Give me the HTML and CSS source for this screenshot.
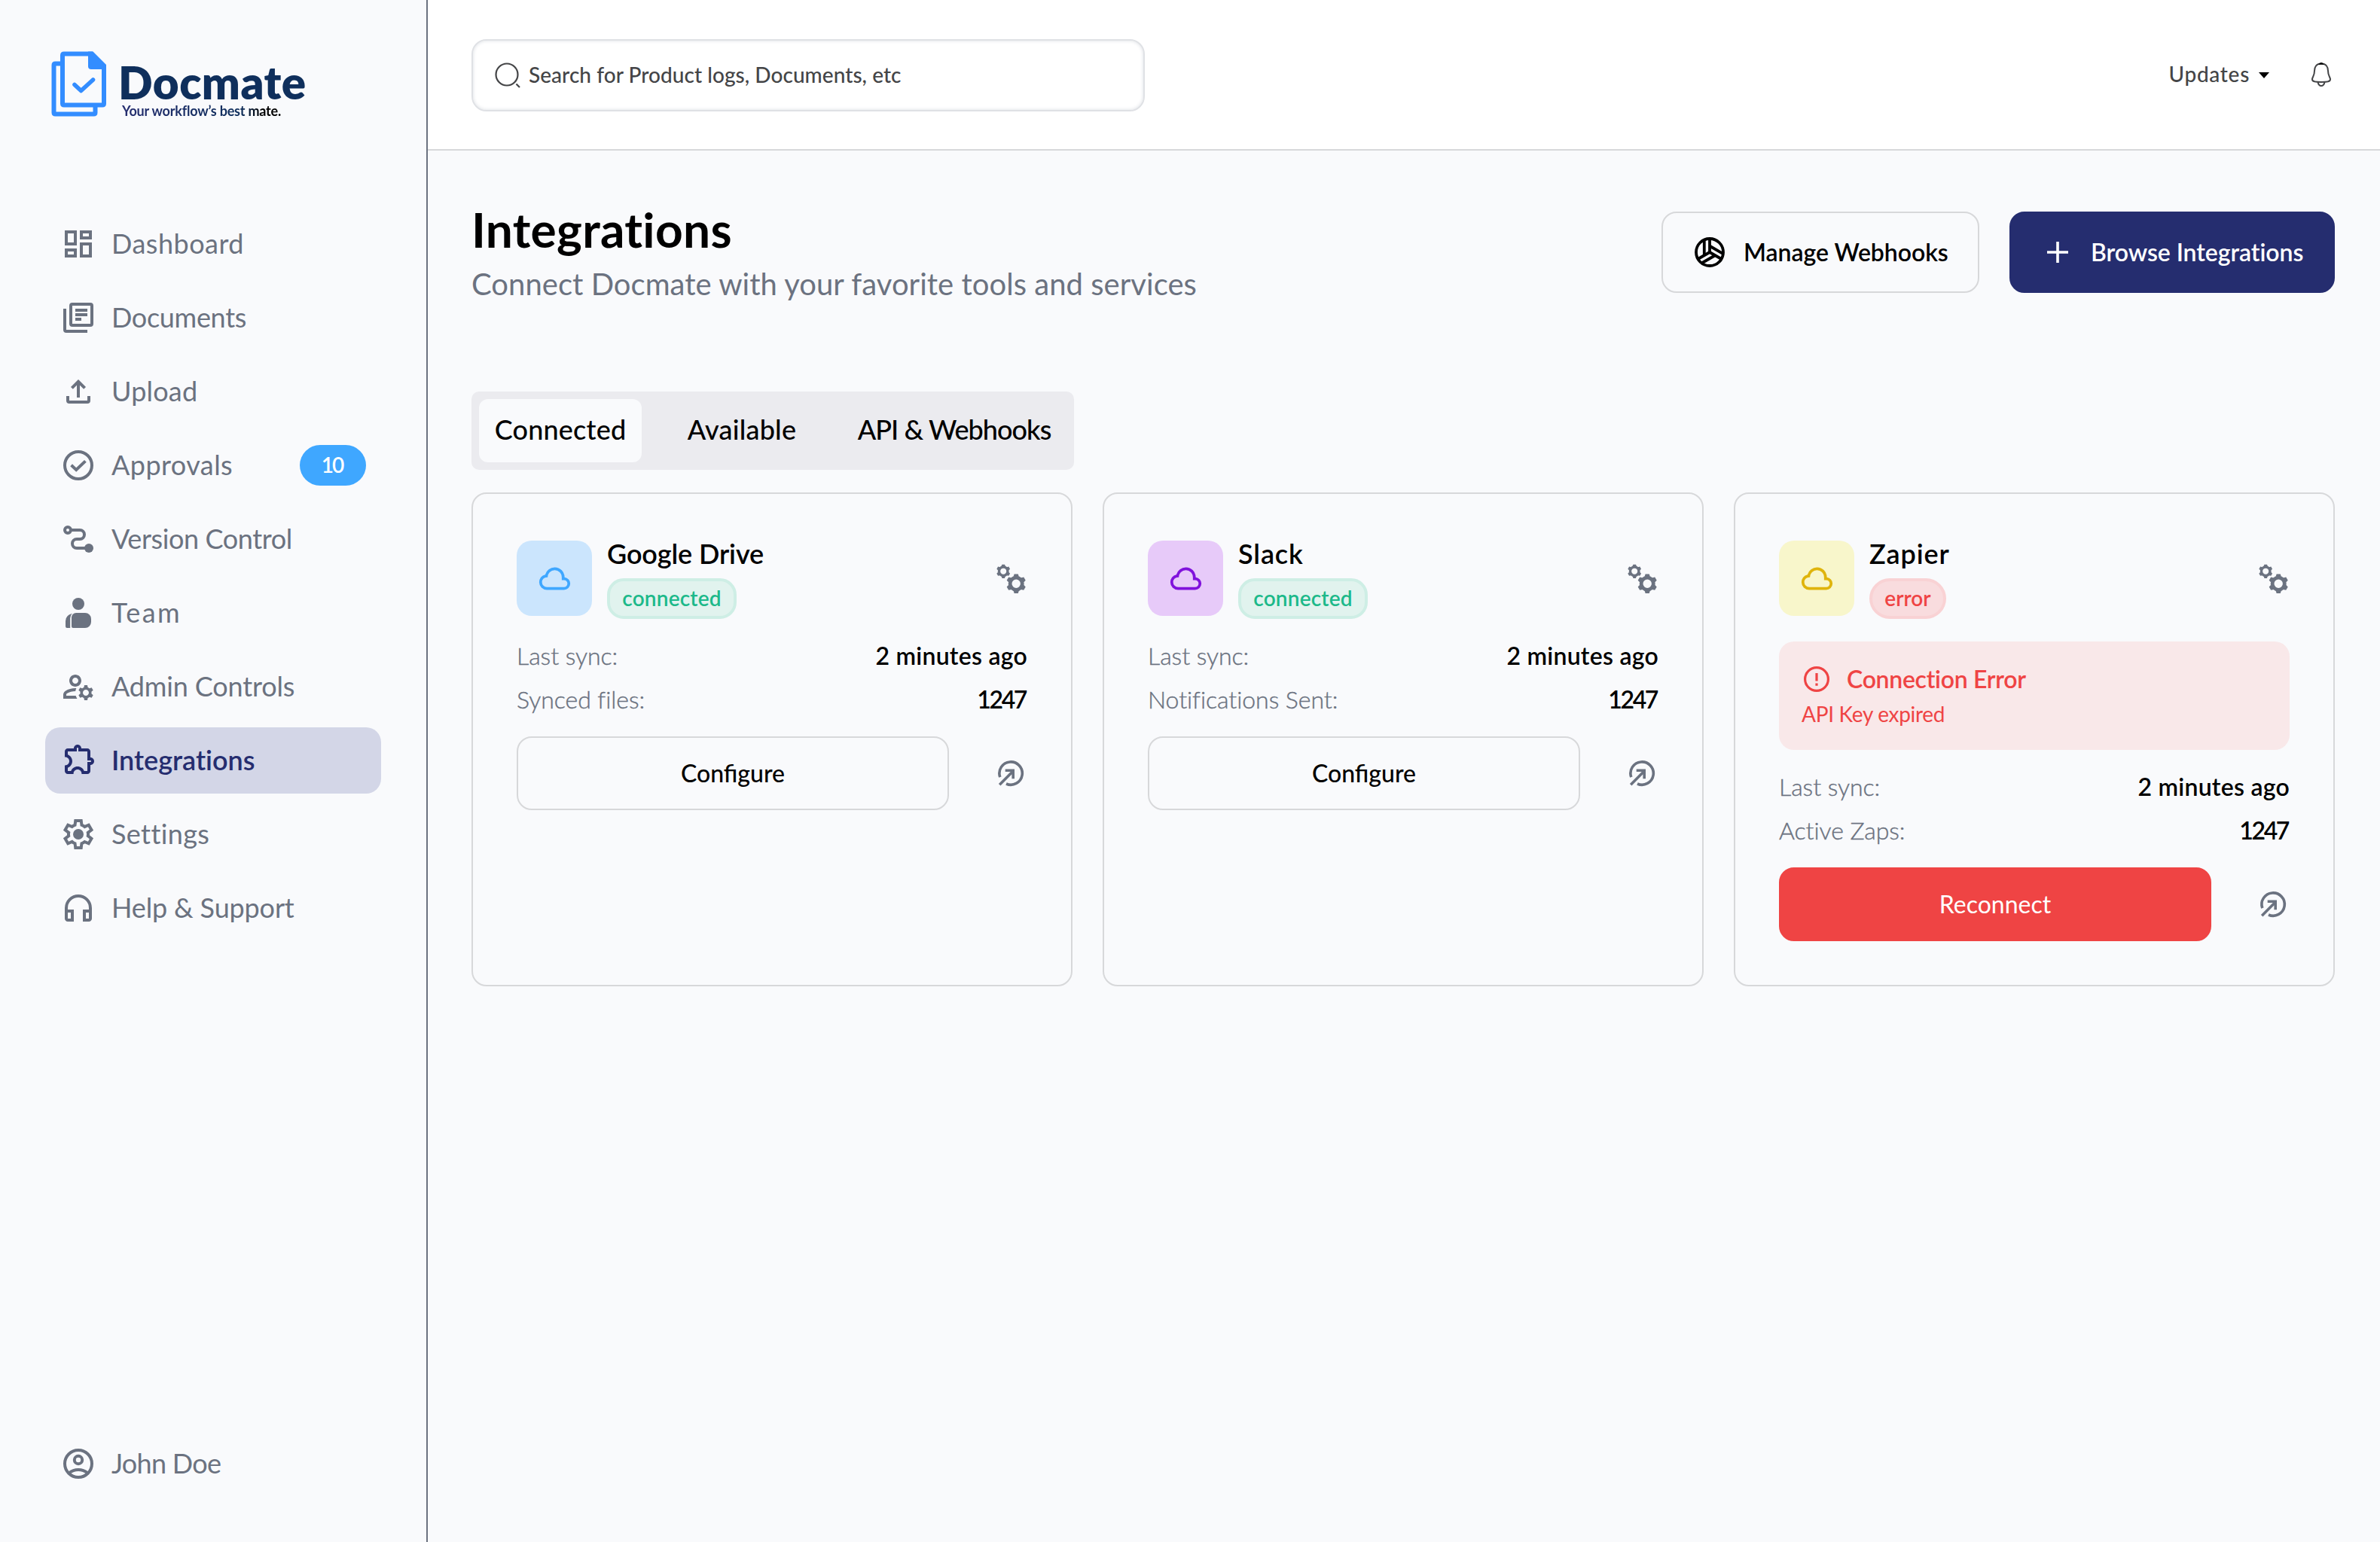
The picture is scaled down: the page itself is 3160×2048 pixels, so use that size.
FILE: index.html
```html
<!DOCTYPE html>
<html lang="en">
<head>
    <meta charset="UTF-8">
    <title>Docmate - Integrations</title>
    <link rel="stylesheet" href="styles.css">
</head>
<body>
    <!-- shared icons -->
    <svg class="defs">
        <symbol id="cloud" viewBox="0 0 24 24">
            <path fill-rule="evenodd" d="M6.5 20q-2.275 0-3.8875-1.575T1 14.575q0-1.95 1.175-3.475T5.25 9.15q.625-2.3 2.5-3.725T12 4q2.925 0 4.9625 2.0375T19 11q1.725.2 2.8625 1.4875T23 15.5q0 1.875-1.3125 3.1875T18.5 20ZM6.5 18h12q1.05 0 1.775-.725T21 15.5q0-1.05-.725-1.775T18.5 13H17v-2q0-2.075-1.4625-3.5375T12 6Q9.925 6 8.4625 7.4625T7 11h-.5q-1.45 0-2.475 1.025T3 14.5q0 1.45 1.025 2.475T6.5 18Z"/>
        </symbol>
        <symbol id="cog" viewBox="-13 -13 26 26">
            <circle r="8.1" fill="none" stroke="currentColor" stroke-width="4.8"/>
            <path id="tooth" d="M-3.6-9.4-2.5-13H2.5L3.6-9.4Z"/>
            <use href="#tooth" transform="rotate(60)"/>
            <use href="#tooth" transform="rotate(120)"/>
            <use href="#tooth" transform="rotate(180)"/>
            <use href="#tooth" transform="rotate(240)"/>
            <use href="#tooth" transform="rotate(300)"/>
        </symbol>
        <symbol id="gears" viewBox="0 0 40 40">
            <use href="#cog" x="1" y="1.5" width="18.4" height="18.4"/>
            <use href="#cog" x="14.2" y="14.2" width="26" height="26"/>
        </symbol>
        <symbol id="open" viewBox="0 0 40 40">
            <g fill="none" stroke="currentColor" stroke-width="3.6">
                <path d="M5.8 25.2A15.2 15.2 0 1 1 14 34"/>
                <path d="M5.2 35.2 23 17.2M12.7 16.2H23.2V27.2"/>
            </g>
        </symbol>
    </svg>

    <div class="app">
        <aside class="sidebar">
            <div class="logo">
                <svg class="logo-mark" viewBox="0 0 74 88" fill="none" stroke="#338dff" stroke-width="6">
                    <path d="M13 16.5H5.5q-2 0-2 2V81.5q0 2 2 2H56.5q2 0 2-2V74"/>
                    <path d="M55 3.6H17q-2 0-2 2V69.5q0 2 2 2H68q2 0 2-2V20"/>
                    <path d="M49 .6H55.5L73 18V24H53q-4 0-4-4Z" fill="#338dff" stroke="none"/>
                    <path d="M31 44.5 39.6 52.5 55.5 38" stroke-width="5.6" stroke-linecap="round" stroke-linejoin="round"/>
                </svg>
                <div class="logo-text">
                    <div class="logo-name">Docmate</div>
                    <div class="logo-tag">Your workflow’s best mate.</div>
                </div>
            </div>

            <nav class="nav">
                <a class="nav-item dashboard">
                    <svg viewBox="0 0 24 24"><path fill-rule="evenodd" d="M21 3h-8v6h8V3ZM11 3H3v10h8V3Zm10 8h-8v10h8V11Zm-10 4H3v6h8v-6ZM19 5v2h-4V5h4ZM9 5v6H5V5h4Zm10 8v6h-4v-6h4ZM9 17v2H5v-2h4Z"/></svg>
                    <span>Dashboard</span>
                </a>
                <a class="nav-item documents">
                    <svg viewBox="0 0 24 24" class="line"><rect x="7" y="3" width="14" height="14" rx="1"/><path d="M3 6V20q0 1 1 1H18M10 7H18M10 10H18M10 13H14"/></svg>
                    <span>Documents</span>
                </a>
                <a class="nav-item upload">
                    <svg viewBox="0 0 24 24" class="line"><path d="M12 16V5.5M7.7 9.7 12 5.4 16.3 9.7M5 15V18q0 1 1 1H18q1 0 1-1V15"/></svg>
                    <span>Upload</span>
                </a>
                <a class="nav-item approvals">
                    <svg viewBox="0 0 24 24" class="line"><circle cx="12" cy="12" r="9"/><path d="M7.3 11.9 10.6 15 16.7 9.2"/></svg>
                    <span>Approvals</span>
                    <b class="badge">10</b>
                </a>
                <a class="nav-item version">
                    <svg viewBox="0 0 24 24" class="line"><circle cx="5" cy="6" r="2"/><path d="M7 6H13a3 3 0 0 1 0 6H11a3 3 0 0 0 0 6H18"/><circle cx="19" cy="18" r="3" class="solid"/></svg>
                    <span>Version Control</span>
                </a>
                <a class="nav-item team">
                    <svg viewBox="0 0 24 24"><circle cx="12" cy="6" r="4"/><path d="M10.5 12H16.5a4 4 0 0 1 4 4v2a4 4 0 0 1-4 4H8.5q-1 0-1-1V15a3 3 0 0 1 3-3ZM8 12.4Q6.6 13.5 6.6 15.5V22H4.5q-1 0-1-1V17.5Q3.5 13.5 8 12.4Z"/></svg>
                    <span>Team</span>
                </a>
                <a class="nav-item admin">
                    <svg viewBox="0 0 24 24"><path fill-rule="evenodd" d="M4 18v-.65c0-.34.16-.66.41-.81C6.1 15.53 8.03 15 10 15c.03 0 .05 0 .08.01.1-.7.3-1.37.59-1.98-.22-.02-.44-.03-.67-.03-2.42 0-4.68.67-6.61 1.82-.88.52-1.39 1.5-1.39 2.53V20h9.26c-.42-.6-.75-1.28-.97-2H4ZM10 12c2.21 0 4-1.79 4-4s-1.79-4-4-4-4 1.79-4 4 1.79 4 4 4Zm0-6c1.1 0 2 .9 2 2s-.9 2-2 2-2-.9-2-2 .9-2 2-2ZM20.75 16c0-.22-.03-.42-.06-.63l1.14-1.01-1-1.73-1.45.49c-.32-.27-.68-.48-1.08-.63L18 11h-2l-.3 1.49c-.4.15-.76.36-1.08.63l-1.45-.49-1 1.73 1.14 1.01c-.03.21-.06.41-.06.63s.03.42.06.63l-1.14 1.01 1 1.73 1.45-.49c.32.27.68.48 1.08.63L16 21h2l.3-1.49c.4-.15.76-.36 1.08-.63l1.45.49 1-1.73-1.14-1.01c.03-.21.06-.41.06-.63ZM17 18c-1.1 0-2-.9-2-2s.9-2 2-2 2 .9 2 2-.9 2-2 2Z"/></svg>
                    <span>Admin Controls</span>
                </a>
                <a class="nav-item integrations active">
                    <svg viewBox="-1 1 24 24"><path d="M10.5 4.5c.28 0 .5.22.5.5v2h6v6h2c.28 0 .5.22.5.5s-.22.5-.5.5h-2v6h-2.12c-.68-1.75-2.39-3-4.38-3s-3.7 1.25-4.38 3H4v-2.12c1.75-.68 3-2.39 3-4.38 0-1.99-1.24-3.7-2.99-4.38L4 7h6V5c0-.28.22-.5.5-.5m0-2C9.12 2.5 8 3.62 8 5H4c-1.1 0-1.99.9-1.99 2v3.8h.29c1.49 0 2.7 1.21 2.7 2.7s-1.21 2.7-2.7 2.7H2V20c0 1.1.9 2 2 2h3.8v-.3c0-1.49 1.21-2.7 2.7-2.7s2.7 1.21 2.7 2.7v.3H17c1.1 0 2-.9 2-2v-4c1.38 0 2.5-1.12 2.5-2.5S20.38 11 19 11V7c0-1.1-.9-2-2-2h-4c0-1.38-1.12-2.5-2.5-2.5Z"/></svg>
                    <span>Integrations</span>
                </a>
                <a class="nav-item settings">
                    <svg viewBox="0 0 24 24"><path fill-rule="evenodd" d="m9.25 22-.4-3.2q-.325-.125-.6125-.3-.2875-.175-.5625-.375L4.7 19.375l-2.75-4.75 2.575-1.95Q4.5 12.5 4.5 12.3375v-.675q0-.1625.025-.3375L1.95 9.375l2.75-4.75 2.975 1.25q.275-.2.575-.375.3-.175.6-.3L9.25 2h5.5l.4 3.2q.325.125.6125.3.2875.175.5625.375l2.975-1.25 2.75 4.75-2.575 1.95q.025.175.025.3375v.675q0 .1625-.05.3375l2.575 1.95-2.75 4.75-2.95-1.25q-.275.2-.575.375-.3.175-.6.3l-.4 3.2ZM11 20h1.975l.35-2.65q.775-.2 1.4375-.5875.6625-.3875 1.2125-.9375l2.475 1.025.975-1.7-2.15-1.625q.125-.35.175-.7375Q17.5 12.4 17.5 12q0-.4-.05-.7875-.05-.3875-.175-.7375l2.15-1.625-.975-1.7-2.475 1.05q-.55-.575-1.2125-.9625-.6625-.3875-1.4375-.5875L13 4h-1.975l-.35 2.65q-.775.2-1.4375.5875-.6625.3875-1.2125.9375L5.55 7.15l-.975 1.7 2.15 1.6q-.125.375-.175.75-.05.375-.05.8 0 .4.05.775.05.375.175.75l-2.15 1.625.975 1.7 2.475-1.05q.55.575 1.2125.9625.6625.3875 1.4375.5875Z"/><circle cx="12" cy="12" r="3.5"/></svg>
                    <span>Settings</span>
                </a>
                <a class="nav-item help">
                    <svg viewBox="0 0 24 24"><path fill-rule="evenodd" d="M12 3a9 9 0 0 0-9 9v7c0 1.1.9 2 2 2h4v-8H5v-1a7 7 0 0 1 14 0v1h-4v8h4c1.1 0 2-.9 2-2v-7a9 9 0 0 0-9-9ZM7 15v4H5v-4h2Zm12 4h-2v-4h2v4Z"/></svg>
                    <span>Help &amp; Support</span>
                </a>
            </nav>

            <a class="nav-item user">
                <svg viewBox="0 0 24 24" class="line"><circle cx="12" cy="12" r="9"/><circle cx="12" cy="9.5" r="2.6"/><path d="M5.8 18.3Q8.5 16 12 16T18.2 18.3"/></svg>
                <span>John Doe</span>
            </a>
        </aside>

        <main class="main">
            <header class="topbar">
                <div class="search">
                    <svg viewBox="0 0 36 36" fill="none" stroke="#444547" stroke-width="2.2"><circle cx="17" cy="17" r="14.5"/><path d="M29.5 29.5 34 34"/></svg>
                    <span>Search for Product logs, Documents, etc</span>
                </div>
                <div class="updates">
                    <span>Updates</span>
                    <i class="caret"></i>
                </div>
                <svg class="bell" viewBox="0 0 32 36" fill="none" stroke="#444547" stroke-width="2">
                    <path d="M16 3.5C9.5 3.5 7 8 7 13 7 20.5 4 21 4 24.5 4 27.5 8 28 16 28S28 27.5 28 24.5C28 21 25 20.5 25 13 25 8 22.5 3.5 16 3.5Z"/>
                    <path d="M11.5 28Q12.5 33 16 33T20.5 28"/>
                    <path d="M12 4.8Q14 2 16 2T20 4.8Z" fill="#000" stroke="none"/>
                </svg>
            </header>

            <section class="content">
                <div class="page-head">
                    <div>
                        <h1>Integrations</h1>
                        <p>Connect Docmate with your favorite tools and services</p>
                    </div>
                    <div class="head-actions">
                        <button class="btn-webhooks">
                            <svg viewBox="-20 -20 40 40" fill="none" stroke="#000" stroke-width="3.8">
                                <circle r="18"/>
                                <path id="seam" d="M0 1.5V-18M-7.2-17V4"/>
                                <use href="#seam" transform="rotate(120)"/>
                                <use href="#seam" transform="rotate(240)"/>
                            </svg>
                            <span>Manage Webhooks</span>
                        </button>
                        <button class="btn-browse">
                            <svg viewBox="0 0 40 40" fill="none" stroke="#fff" stroke-width="3.6"><path d="M20 6V34M6 20H34"/></svg>
                            <span>Browse Integrations</span>
                        </button>
                    </div>
                </div>

                <div class="tabs">
                    <div class="tab on">Connected</div>
                    <div class="tab">Available</div>
                    <div class="tab webhooks">API &amp; Webhooks</div>
                </div>

                <div class="cards">
                    <div class="card">
                        <div class="card-head">
                            <div class="tile blue"><svg><use href="#cloud"/></svg></div>
                            <div class="card-name">
                                <h2>Google Drive</h2>
                                <span class="pill ok">connected</span>
                            </div>
                            <svg class="act"><use href="#gears"/></svg>
                        </div>
                        <div class="row"><span>Last sync:</span><b>2 minutes ago</b></div>
                        <div class="row"><span>Synced files:</span><b class="num">1247</b></div>
                        <div class="card-foot">
                            <button class="btn">Configure</button>
                            <svg class="act"><use href="#open"/></svg>
                        </div>
                    </div>

                    <div class="card">
                        <div class="card-head">
                            <div class="tile purple"><svg><use href="#cloud"/></svg></div>
                            <div class="card-name">
                                <h2 class="wide">Slack</h2>
                                <span class="pill ok">connected</span>
                            </div>
                            <svg class="act"><use href="#gears"/></svg>
                        </div>
                        <div class="row"><span>Last sync:</span><b>2 minutes ago</b></div>
                        <div class="row"><span>Notifications Sent:</span><b class="num">1247</b></div>
                        <div class="card-foot">
                            <button class="btn">Configure</button>
                            <svg class="act"><use href="#open"/></svg>
                        </div>
                    </div>

                    <div class="card">
                        <div class="card-head">
                            <div class="tile yellow"><svg><use href="#cloud"/></svg></div>
                            <div class="card-name">
                                <h2 class="wide">Zapier</h2>
                                <span class="pill err">error</span>
                            </div>
                            <svg class="act"><use href="#gears"/></svg>
                        </div>
                        <div class="alert">
                            <div class="alert-title">
                                <svg viewBox="0 0 40 40" fill="none" stroke="#ef4444" stroke-width="3.2"><circle cx="20" cy="20" r="15.4"/><path d="M20 12V22.5M20 25.5V28.7"/></svg>
                                <span>Connection Error</span>
                            </div>
                            <div class="alert-text">API Key expired</div>
                        </div>
                        <div class="row"><span>Last sync:</span><b>2 minutes ago</b></div>
                        <div class="row"><span>Active Zaps:</span><b class="num">1247</b></div>
                        <div class="card-foot">
                            <button class="btn red">Reconnect</button>
                            <svg class="act"><use href="#open"/></svg>
                        </div>
                    </div>
                </div>
            </section>
        </main>
    </div>
</body>
</html>
```

FILE: styles.css
```css
*{box-sizing:border-box;}
body{margin:0; background:#f9fafc; color:#000; font-family:Lato,"Open Sans",sans-serif; font-variant-ligatures:none;}
h1,h2,p{margin:0;}
button{font-family:inherit; color:#000; padding:0; cursor:pointer;}
svg{display:block; flex:none; fill:currentColor;}
svg[fill="none"]{fill:none;}
.defs{position:absolute; width:0; height:0;}
.line{fill:none; stroke:currentColor; stroke-width:2;}
.line .solid{fill:currentColor; stroke:none;}

.app{display:flex; width:3160px; height:2048px;}

/* sidebar */
.sidebar{flex:none; display:flex; flex-direction:column; width:568px; padding:68px 60px 60px; border-right:2px solid #6b7280;}
.logo{display:flex; gap:20px; height:88px; padding-left:8px;}
.logo-mark{width:74px; height:88px;}
.logo-text{padding-top:12px;}
.logo-name{font-size:60px; line-height:58px; font-weight:800; letter-spacing:.5px; margin-left:-5px; color:#0f2f5c;}
.logo-tag{font-size:18px; line-height:18px; font-weight:700; letter-spacing:-0.2px; width:max-content;
background:linear-gradient(90deg,#252d6f 0%,#0f2f5c 75%,#000 88%); background-clip:text; -webkit-background-clip:text; color:transparent;}

.nav{display:flex; flex-direction:column; gap:10px; margin-top:124px;}
.nav-item{display:flex; align-items:center; gap:20px; width:446px; height:88px; padding:0 20px; border-radius:20px; font-size:36px; line-height:44px; color:#6b7280;}
.nav-item svg{width:48px; height:48px;}
.nav-item span{padding-bottom:3px;}
.nav-item.active{background:#d3d6e7; color:#252d6f; font-weight:600;}
.dashboard{letter-spacing:.5px;}
.documents{letter-spacing:-.3px;}
.upload{letter-spacing:.2px;}
.approvals{letter-spacing:.45px;}
.version{letter-spacing:-.4px;}
.team{letter-spacing:2.4px;}
.admin,.help{letter-spacing:-.15px;}
.settings{letter-spacing:.4px;}
.user{margin-top:auto; letter-spacing:-.7px;}
.badge{margin-left:auto; width:88px; height:54px; padding-right:2px; border-radius:27px; background:#3fa7ff; color:#fff; font-size:28px; line-height:52px; font-weight:600; letter-spacing:-2px; text-align:center;}

/* top bar */
.main{flex:1; min-width:0; display:flex; flex-direction:column;}
.topbar{display:flex; align-items:center; height:200px; padding:0 60px 0 58px; background:#fff; border-bottom:2px solid #d7d8da; color:#444547; font-size:28px; font-weight:500;}
.search{display:flex; align-items:center; gap:10px; width:894px; height:96px; margin-top:2px; padding-left:28px; border:2px solid #dfe1e5; border-radius:20px; box-shadow:inset 0 0 5px #dcdfe4; letter-spacing:.05px;}
.search svg{width:36px; height:36px;}
.search span{padding-bottom:3px;}
.updates{display:flex; align-items:center; gap:12px; margin-left:auto; letter-spacing:.7px;}
.updates span{padding-bottom:3px;}
.caret{width:0; height:0; border:7px solid transparent; border-top:8px solid #000; border-bottom:0; margin-top:1px;}
.bell{width:32px; height:36px; margin-left:53px; margin-right:2px;}

/* page head */
.content{padding:64px 60px 0 58px;}
.page-head{display:flex; justify-content:space-between; align-items:center; height:142px;}
h1{font-size:64px; line-height:78px; font-weight:700; letter-spacing:.3px;}
.page-head p{font-size:40px; line-height:48px; margin:9px 0 3px; color:#6b7280; letter-spacing:.03px;}
.head-actions{display:flex; gap:40px;}
.head-actions button{display:flex; align-items:center; height:108px; border:2px solid #d7d8da; border-radius:20px; background:none; font-size:32px; font-weight:600; letter-spacing:-.05px; padding-left:42px;}
.head-actions svg{width:40px; height:40px;}
.head-actions span{padding-bottom:2px;}
.head-actions .btn-webhooks{width:422px; gap:25px;}
.head-actions .btn-browse{width:432px; gap:24px; background:#252d6f; border-color:#252d6f; color:#fff;}

.tabs{display:flex; gap:40px; width:800px; height:104px; margin-top:114px; padding:10px; border-radius:10px; background:#ebebef;}
.tab{width:216px; height:84px; border-radius:12px; font-size:36px; line-height:81px; font-weight:500; text-align:center; letter-spacing:.2px;}
.tab + .tab{width:186px;}
.tab + .tab.webhooks{width:298px; letter-spacing:-.95px;}
.tab.on{background:#f9fafc;}

/* cards */
.cards{display:grid; grid-template-columns:repeat(3,1fr); gap:40px; margin-top:30px;}
.card{height:656px; padding:58px; border:2px solid #d7d8da; border-radius:20px;}
.card-head{display:flex; align-items:center; height:108px; margin-bottom:30px;}
.tile{display:flex; align-items:center; justify-content:center; width:100px; height:100px; border-radius:20px;}
.tile svg{width:45px; height:45px;}
.blue{background:#cbe5fd; color:#3fa7ff;}
.purple{background:#e7caf9; color:#8012dc;}
.yellow{background:#f8f6cb; color:#dfb40c;}
.card-name{flex:1; padding-left:20px;}
h2{font-size:36px; line-height:42px; margin-bottom:12px; font-weight:600; letter-spacing:-.1px;}
h2.wide{letter-spacing:.9px;}
.pill{display:block; width:172px; height:54px; border:4px solid; border-radius:22px; font-size:28px; line-height:44px; font-weight:600; text-align:center; letter-spacing:.2px;}
.ok{background:#e1f3ee; border-color:#ceeee5; color:#1cb98a;}
.err{width:102px; border-radius:27px; background:#f9dcde; border-color:#f9d2d4; color:#ef4444; letter-spacing:0;}
.act{width:40px; height:40px; color:#6b7280; margin-right:2px;}
.row{display:flex; justify-content:space-between; height:38px; line-height:37px; margin-bottom:20px; font-size:32px; color:#6b7280; font-weight:300;}
.row span{-webkit-text-stroke:.4px #6b7280; letter-spacing:-.05px;}
.row b{color:#000; font-weight:600; letter-spacing:.25px;}
.row .num{letter-spacing:-2.4px; padding-right:2px;}
.card-foot{display:flex; align-items:center; justify-content:space-between; margin-top:30px;}
.btn{width:574px; height:98px; border:2px solid #d7d8da; border-radius:20px; background:none; font-size:32px; line-height:92px; font-weight:500;}
.btn.red{background:#ef4444; border-color:#ef4444; color:#fff; font-weight:400;}

.alert{height:144px; margin-bottom:30px; padding:30px; border-radius:20px; background:#f9e8e9; color:#ef4444;}
.alert-title{display:flex; align-items:center; gap:20px; height:40px; font-size:32px; font-weight:600; letter-spacing:-.3px;}
.alert-title span{padding-bottom:1px;}
.alert-title svg{width:40px; height:40px;}
.alert-text{font-size:28px; line-height:34px; margin-top:9px; letter-spacing:-.3px;}
```
